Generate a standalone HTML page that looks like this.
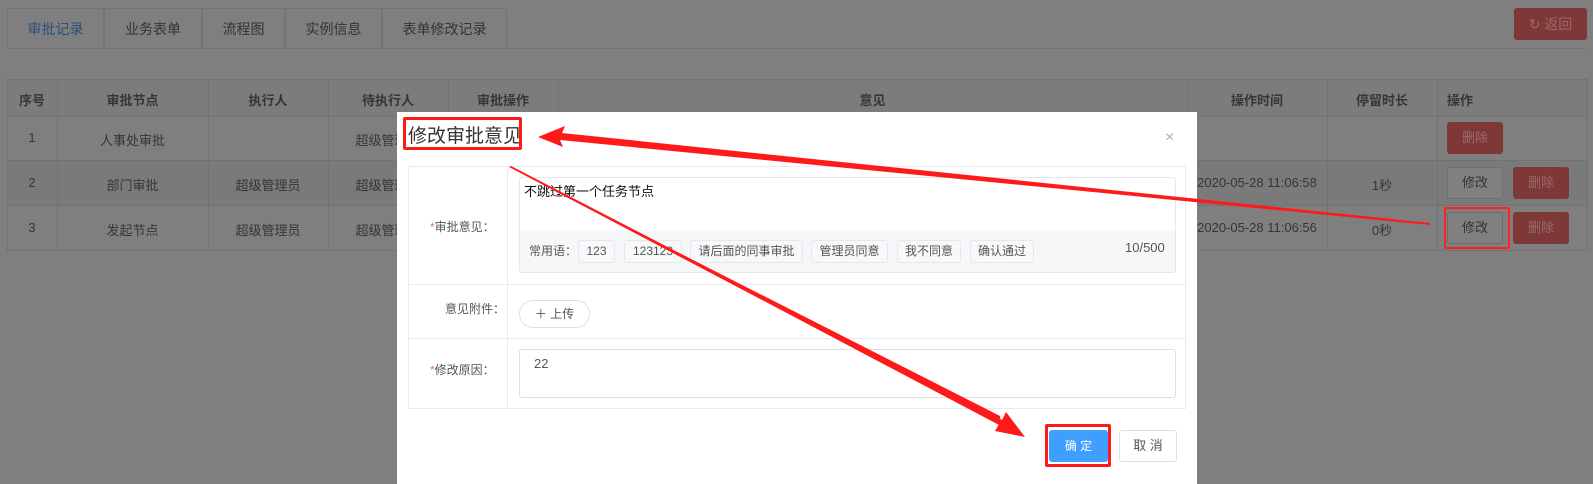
<!DOCTYPE html>
<html><head><meta charset="utf-8"><style>
*{margin:0;padding:0;box-sizing:border-box}
body{width:1593px;height:484px;background:#7f7f7f;font-family:"Liberation Sans","Noto Sans CJK SC",sans-serif;font-size:13px;color:#333;position:relative;overflow:hidden}
.a{position:absolute}
.tab{position:absolute;top:8px;height:40px;border:1px solid #747474;border-bottom:none;line-height:40px;text-align:center;font-size:14px;color:#333;background:#7f7f7f}
.c{position:absolute;text-align:center;color:#363636;font-size:13px}
.vl{position:absolute;top:79px;width:1px;height:171px;background:#727272}
.hl{position:absolute;left:7px;width:1580px;height:1px;background:#727272}
.btnr{position:absolute;width:56px;height:32px;background:#7e3838;color:#9a6a6a;border-radius:3px;text-align:center;line-height:32px;font-size:13px}
.btnw{position:absolute;width:56px;height:32px;background:#808080;border:1px solid #6e6e6e;color:#333;border-radius:3px;text-align:center;line-height:30px;font-size:13px}
.tag{position:absolute;top:240px;height:23px;border:1px solid #e4e7ed;border-radius:3px;background:#f7f8fa;color:#555;font-size:12px;line-height:21px;text-align:center}
</style></head><body>
<div class="tab" style="left:7px;width:97px;color:#2a4f7a;border-bottom:1px solid #7f7f7f;height:41px">审批记录</div>
<div class="tab" style="left:104px;width:98px">业务表单</div>
<div class="tab" style="left:202px;width:83px">流程图</div>
<div class="tab" style="left:285px;width:97px">实例信息</div>
<div class="tab" style="left:382px;width:125px">表单修改记录</div>
<div class="a" style="left:7px;top:48px;width:1580px;height:1px;background:#747474"></div>
<div class="a" style="left:1514px;top:8px;width:73px;height:32px;background:#7e3838;border-radius:3px;color:#9a6a6a;line-height:32px;text-align:center;font-size:14px">↻ 返回</div>

<div class="a" style="left:7px;top:79px;width:1580px;height:37px;background:#7c7c7c"></div>
<div class="a" style="left:7px;top:160px;width:1580px;height:45px;background:#7a7a7a"></div>
<div class="hl" style="top:79px"></div><div class="hl" style="top:116px"></div><div class="hl" style="top:160px"></div><div class="hl" style="top:205px"></div><div class="hl" style="top:250px"></div>
<div class="vl" style="left:7px"></div><div class="vl" style="left:57px"></div><div class="vl" style="left:208px"></div><div class="vl" style="left:328px"></div><div class="vl" style="left:448px"></div><div class="vl" style="left:558px"></div><div class="vl" style="left:1187px"></div><div class="vl" style="left:1327px"></div><div class="vl" style="left:1437px"></div><div class="vl" style="left:1587px"></div>
<div class="c" style="left:7px;width:50px;top:90px;font-weight:bold">序号</div>
<div class="c" style="left:57px;width:151px;top:90px;font-weight:bold">审批节点</div>
<div class="c" style="left:208px;width:120px;top:90px;font-weight:bold">执行人</div>
<div class="c" style="left:328px;width:120px;top:90px;font-weight:bold">待执行人</div>
<div class="c" style="left:448px;width:110px;top:90px;font-weight:bold">审批操作</div>
<div class="c" style="left:558px;width:629px;top:90px;font-weight:bold">意见</div>
<div class="c" style="left:1187px;width:140px;top:90px;font-weight:bold">操作时间</div>
<div class="c" style="left:1327px;width:110px;top:90px;font-weight:bold">停留时长</div>
<div class="c" style="left:1447px;top:90px;font-weight:bold">操作</div>
<div class="c" style="left:7px;width:50px;top:130px">1</div><div class="c" style="left:57px;width:151px;top:130px">人事处审批</div><div class="c" style="left:328px;width:120px;top:130px">超级管理员</div>
<div class="c" style="left:7px;width:50px;top:175px">2</div><div class="c" style="left:57px;width:151px;top:175px">部门审批</div><div class="c" style="left:208px;width:120px;top:175px">超级管理员</div><div class="c" style="left:328px;width:120px;top:175px">超级管理员</div>
<div class="c" style="left:7px;width:50px;top:220px">3</div><div class="c" style="left:57px;width:151px;top:220px">发起节点</div><div class="c" style="left:208px;width:120px;top:220px">超级管理员</div><div class="c" style="left:328px;width:120px;top:220px">超级管理员</div>
<div class="c" style="left:1187px;width:140px;top:175px">2020-05-28 11:06:58</div><div class="c" style="left:1327px;width:110px;top:175px">1秒</div>
<div class="c" style="left:1187px;width:140px;top:220px">2020-05-28 11:06:56</div><div class="c" style="left:1327px;width:110px;top:220px">0秒</div>
<div class="btnr" style="left:1447px;top:122px">删除</div>
<div class="btnw" style="left:1447px;top:167px">修改</div><div class="btnr" style="left:1513px;top:167px">删除</div>
<div class="btnw" style="left:1447px;top:212px">修改</div><div class="btnr" style="left:1513px;top:212px">删除</div>
<div class="a" style="left:1444px;top:207px;width:66px;height:42px;border:2px solid #ff2020;border-radius:2px"></div>

<!-- modal -->
<div class="a" style="left:397px;top:112px;width:800px;height:372px;background:#fff"></div>
<div class="a" style="left:408px;top:121px;font-size:19px;color:#333">修改审批意见</div>
<div class="a" style="left:403px;top:117px;width:119px;height:33px;border:3px solid #ff1a1a;border-radius:2px"></div>
<div class="a" style="left:1165px;top:129px;font-size:16px;color:#aab">×</div>
<div class="a" style="left:408px;top:166px;width:778px;height:243px;border:1px solid #e8ebf2"></div>
<div class="a" style="left:507px;top:166px;width:1px;height:243px;background:#e8ebf2"></div>
<div class="a" style="left:408px;top:284px;width:778px;height:1px;background:#e8ebf2"></div>
<div class="a" style="left:408px;top:338px;width:778px;height:1px;background:#e8ebf2"></div>
<div class="a" style="left:430px;top:218px;font-size:12px;color:#555"><span style="color:#f56c6c">*</span>审批意见：</div>
<div class="a" style="left:445px;top:300px;font-size:12px;color:#555">意见附件：</div>
<div class="a" style="left:430px;top:361px;font-size:12px;color:#555"><span style="color:#f56c6c">*</span>修改原因：</div>
<div class="a" style="left:519px;top:177px;width:657px;height:96px;border:1px solid #e4e7ed;border-radius:3px;background:#fff"></div>
<div class="a" style="left:520px;top:230px;width:655px;height:42px;background:#f6f7f9"></div>
<div class="a" style="left:524px;top:181px;font-size:13px;color:#111">不跳过第一个任务节点</div>
<div class="a" style="left:529px;top:242px;font-size:12px;color:#555">常用语：</div>
<div class="tag" style="left:578px;width:37px">123</div>
<div class="tag" style="left:624px;width:58px">123123</div>
<div class="tag" style="left:690px;width:113px">请后面的同事审批</div>
<div class="tag" style="left:811px;width:77px">管理员同意</div>
<div class="tag" style="left:897px;width:64px">我不同意</div>
<div class="tag" style="left:970px;width:64px">确认通过</div>
<div class="a" style="left:1125px;top:240px;font-size:13px;color:#555">10/500</div>
<div class="a" style="left:519px;top:300px;width:71px;height:28px;border:1px solid #dcdfe6;border-radius:14px;text-align:center;line-height:26px;font-size:12px;color:#555">＋ 上传</div>
<div class="a" style="left:519px;top:349px;width:657px;height:49px;border:1px solid #dcdfe6;border-radius:3px"></div>
<div class="a" style="left:534px;top:356px;font-size:13px;color:#555">22</div>
<div class="a" style="left:1049px;top:430px;width:59px;height:32px;background:#409eff;border-radius:3px;color:#fff;text-align:center;line-height:32px;font-size:12px">确 定</div>
<div class="a" style="left:1045px;top:424px;width:66px;height:43px;border:3px solid #ff1a1a;border-radius:2px"></div>
<div class="a" style="left:1119px;top:430px;width:58px;height:32px;border:1px solid #dcdfe6;border-radius:3px;color:#555;text-align:center;line-height:30px;font-size:13px">取 消</div>

<svg class="a" style="left:0;top:0" width="1593" height="484">
<polygon points="1430,223 1430,225 560,140 563,147 538,137 565,126 562,133" fill="#ff1a1a"/>
<polygon points="509,167 511,166 1002,420 1006,412 1025,437 995,431 999,424" fill="#ff1a1a"/>
<polygon points="1430,224 560,135 560,138" fill="#ff1a1a"/>
<polygon points="510,167 1000,416 1001,426" fill="#ff1a1a"/>
</svg>
</body></html>
